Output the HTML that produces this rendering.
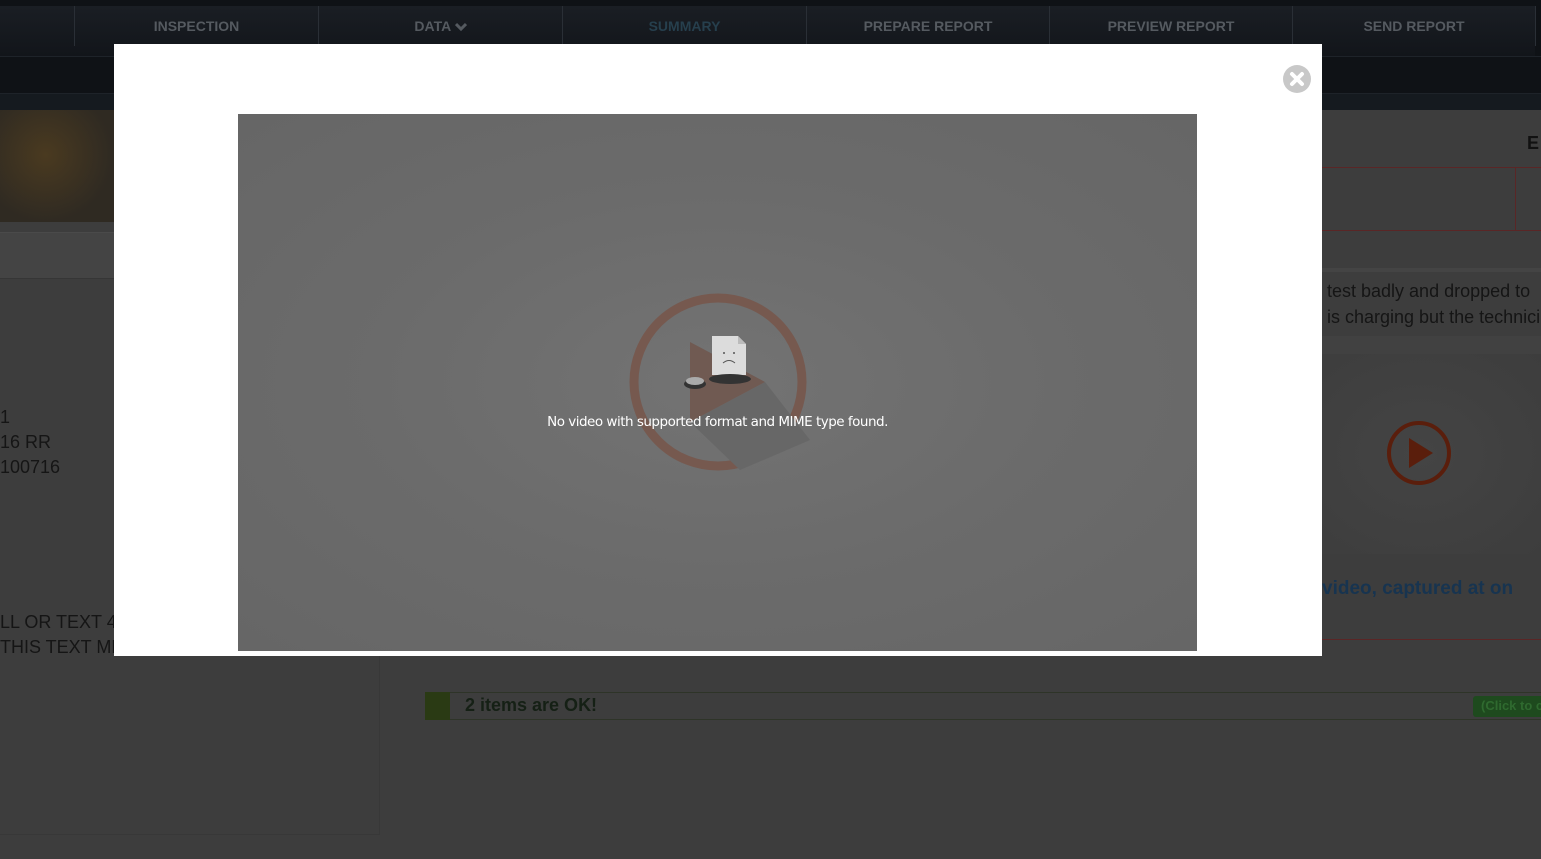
<!DOCTYPE html>
<html><head><meta charset="utf-8"><style>
*{margin:0;padding:0;box-sizing:border-box}
body{width:1541px;height:859px;overflow:hidden;background:#3d3d3d;font-family:"Liberation Sans",Arial,sans-serif;position:relative}
.a{position:absolute}
.nav{left:0;top:0;width:1541px;height:56px;background:#0f1216}
.navin{left:0;top:6px;width:1535px;height:50px;background:linear-gradient(#1a1e24,#12151a)}
.ni{top:6px;height:40px;border-left:1px solid #2a2f36;color:#555a60;font-weight:bold;font-size:14px;line-height:40px;text-align:center}
.row2{left:0;top:56px;width:1541px;height:38px;background:#0f1216;border-top:1px solid #1e2329;border-bottom:1px solid #1e2329}
.row3{left:0;top:94px;width:1541px;height:16px;background:#151a1f}
.t{color:#151515;font-size:18px}
</style></head><body>
<div class="a nav"></div><div class="a navin"></div>
<div class="a ni" style="left:74px;width:244px">INSPECTION</div>
<div class="a ni" style="left:318px;width:244px">DATA <svg width="12" height="10" style="vertical-align:-1px"><path d="M1 2L6 7L11 2" stroke="#555a60" stroke-width="3" fill="none"/></svg></div>
<div class="a ni" style="left:562px;width:244px;color:#263f4d">SUMMARY</div>
<div class="a ni" style="left:806px;width:243px">PREPARE REPORT</div>
<div class="a ni" style="left:1049px;width:243px">PREVIEW REPORT</div>
<div class="a ni" style="left:1292px;width:244px;border-right:1px solid #2a2f36">SEND REPORT</div>
<div class="a row2"></div><div class="a row3"></div>
<div class="a" style="left:0;top:110px;width:114px;height:112px;background:radial-gradient(circle at 40% 40%,#4a3a20,#2f2a22 70%)"></div>
<div class="a" style="left:0;top:232px;width:114px;height:47px;background:#444;border-top:1px solid #4a4a4a;border-bottom:1px solid #363636"></div>
<div class="a" style="left:0;top:280px;width:380px;height:555px;border-right:1px solid #383838;border-bottom:1px solid #383838"></div>
<div class="a t" style="left:0;top:405px;line-height:25px">1<br>16 RR<br>100716</div>
<div class="a t" style="left:0;top:610px;line-height:25px">LL OR TEXT 4<br>THIS TEXT ME</div>
<div class="a" style="left:425px;top:692px;width:1116px;height:28px;border:1px solid #2e3428;border-right:none"></div>
<div class="a" style="left:425px;top:692px;width:25px;height:28px;background:#2a3a14"></div>
<div class="a" style="left:465px;top:695px;font-size:18px;font-weight:bold;color:#152015">2 items are OK!</div>
<div class="a" style="left:1473px;top:696px;width:80px;height:21px;background:#1e4a1e;border-radius:3px;color:#2f6a2f;font-size:13px;font-weight:bold;padding:2px 8px">(Click to c</div>
<div class="a" style="left:1527px;top:133px;font-size:18px;font-weight:bold;color:#111">E</div>
<div class="a" style="left:1322px;top:167px;width:219px;height:64px;border-top:1px solid #5a2626;border-bottom:1px solid #5a2626"></div>
<div class="a" style="left:1515px;top:167px;width:1px;height:64px;background:#5a2626"></div>
<div class="a" style="left:1322px;top:268px;width:219px;height:4px;background:#444"></div>
<div class="a t" style="left:1322px;top:278px;line-height:26px;white-space:nowrap;overflow:hidden;width:219px;height:58px">&nbsp;test badly and dropped to<br>&nbsp;is charging but the technici<br>xxxxx</div>
<div class="a" style="left:1322px;top:336px;width:219px;height:18px;background:#414141"></div>
<div class="a" style="left:1322px;top:354px;width:219px;height:200px;background:radial-gradient(ellipse at 45% 50%,#444,#3d3d3d)"></div>
<svg class="a" style="left:1385px;top:420px" width="68" height="68"><circle cx="34" cy="33" r="30" fill="none" stroke="#5a1e0c" stroke-width="4"/><path d="M24 18 L48 33 L24 48Z" fill="#5a1e0c"/></svg>
<div class="a" style="left:1322px;top:554px;width:219px;height:86px;border-bottom:1px solid #5a2626"></div>
<div class="a" style="left:1322px;top:578px;font-size:19px;font-weight:bold;color:#173450">video, captured at on</div>
<div class="a" style="left:114px;top:44px;width:1208px;height:612px;background:#fff"></div>
<svg class="a" style="left:1282px;top:64px" width="30" height="30"><circle cx="15" cy="15" r="14" fill="#c8c8c8"/><path d="M10 10L20 20M20 10L10 20" stroke="#fff" stroke-width="4" stroke-linecap="round"/></svg>
<div class="a" style="left:238px;top:114px;width:959px;height:537px;background:radial-gradient(ellipse at 50% 50%,#737373,#6b6b6b 50%,#666 100%)"></div>
<svg class="a" style="left:620px;top:290px" width="200" height="190">
<circle cx="98" cy="92" r="84" fill="none" stroke="#76594f" stroke-width="9"/>
<path d="M70 52 L145 92 L70 132Z" fill="#705a52"/>
<path d="M70 132 L145 92 L190 150 L120 180Z" fill="#676767"/>
<path d="M92 46 h26 l8 8 v31 h-34z" fill="#dcdcdc"/><path d="M118 46 v8 h8" fill="#bbb"/>
<circle cx="104" cy="63" r="1" fill="#555"/><circle cx="114" cy="63" r="1" fill="#555"/>
<path d="M103 73 q6 -5 12 0" stroke="#555" fill="none"/>
<ellipse cx="110" cy="89" rx="21" ry="5" fill="#333"/>
<ellipse cx="75" cy="94" rx="11" ry="5" fill="#333"/>
<ellipse cx="75" cy="91" rx="9" ry="4" fill="#aaa"/>
</svg>
<div class="a" style="left:238px;top:414px;width:959px;text-align:center;color:#fff;font-size:13.5px;font-family:'DejaVu Sans','Liberation Sans',sans-serif;letter-spacing:-0.5px">No video with supported format and MIME type found.</div>
</body></html>
